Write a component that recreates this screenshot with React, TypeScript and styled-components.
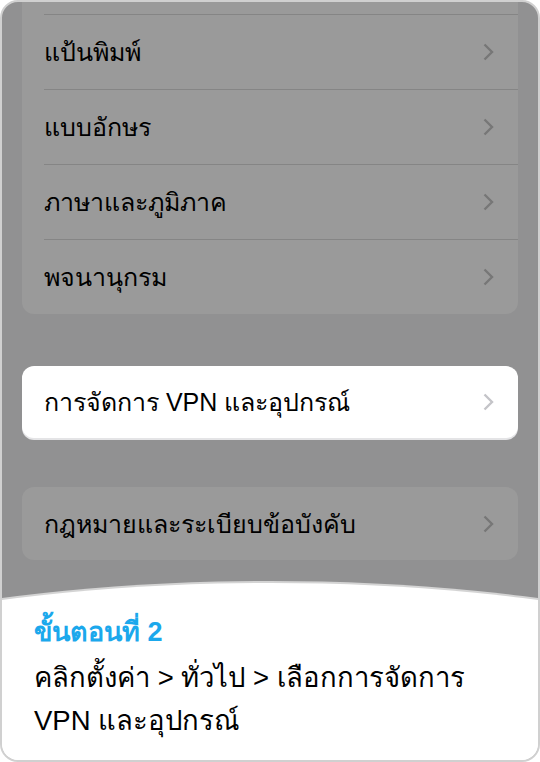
import React from "react";
import styled, { createGlobalStyle } from "styled-components";

const GlobalStyle = createGlobalStyle`
  html, body {
    margin: 0;
    padding: 0;
    background: #ffffff;
  }
  * {
    box-sizing: border-box;
  }
`;

const Frame = styled.div`
  width: 540px;
  height: 762px;
  border: 2px solid #d0d0d0;
  border-radius: 18px;
  overflow: hidden;
  background: #919192;
  display: flex;
  flex-direction: column;
  font-family: "Liberation Sans", "Noto Sans", sans-serif;
`;

const Screen = styled.div`
  padding: 0 20px;
  display: flex;
  flex-direction: column;
`;

const Group = styled.div<{ $top?: number; $gap?: number; $lit?: boolean }>`
  margin-top: ${(p) => p.$gap ?? 0}px;
  padding-top: ${(p) => p.$top ?? 0}px;
  background: ${(p) => (p.$lit ? "#ffffff" : "#9a9a9a")};
  border-radius: 12px;
  padding-left: 22px;
  box-shadow: ${(p) => (p.$lit ? "0 2px 0 #e4e4e6" : "none")};
`;

const Row = styled.div<{ $divided?: boolean; $height?: number }>`
  height: ${(p) => p.$height ?? 75}px;
  border-top: ${(p) => (p.$divided ? "1px solid #858585" : "none")};
  display: flex;
  align-items: center;
  justify-content: space-between;
  padding-right: 24px;
`;

const Label = styled.span`
  font-size: 25px;
  color: #000000;
`;

const Chevron = ({ color }: { color: string }) => (
  <svg width="11" height="18" viewBox="0 0 11 18">
    <path d="M1.5 1.5 L9 9 L1.5 16.5" fill="none" stroke={color} strokeWidth="2.4" />
  </svg>
);

const Sheet = styled.div`
  margin-top: auto;
  position: relative;
  background: #ffffff;
  padding: 14px 32px 18px;
  &::before {
    content: "";
    position: absolute;
    left: -50%;
    width: 200%;
    top: -17px;
    height: 254px;
    border-radius: 50%;
    background: #ffffff;
    box-shadow: 0 -2px 0 #d4d4d4;
  }
`;

const StepTitle = styled.div`
  position: relative;
  font-size: 27px;
  font-weight: bold;
  color: #1ba8ec;
  line-height: 36px;
`;

const StepText = styled.div`
  position: relative;
  margin-top: 6px;
  font-size: 27.5px;
  color: #000000;
  line-height: 43px;
`;

const topRows = ["แป้นพิมพ์", "แบบอักษร", "ภาษาและภูมิภาค", "พจนานุกรม"];

export default function App() {
  return (
    <>
      <GlobalStyle />
      <Frame>
        <Screen>
          <Group $top={74} style={{ marginTop: -62 }}>
            {topRows.map((label) => (
              <Row key={label} $divided>
                <Label>{label}</Label>
                <Chevron color="#777777" />
              </Row>
            ))}
          </Group>
          <Group $lit $gap={52}>
            <Row $height={72}>
              <Label>การจัดการ VPN และอุปกรณ์</Label>
              <Chevron color="#c4c4c8" />
            </Row>
          </Group>
          <Group $gap={49}>
            <Row $height={73}>
              <Label>กฎหมายและระเบียบข้อบังคับ</Label>
              <Chevron color="#777777" />
            </Row>
          </Group>
        </Screen>
        <Sheet>
          <StepTitle>ขั้นตอนที่ 2</StepTitle>
          <StepText>
            คลิกตั้งค่า &gt; ทั่วไป &gt; เลือกการจัดการ
            <br />
            VPN และอุปกรณ์
          </StepText>
        </Sheet>
      </Frame>
    </>
  );
}
